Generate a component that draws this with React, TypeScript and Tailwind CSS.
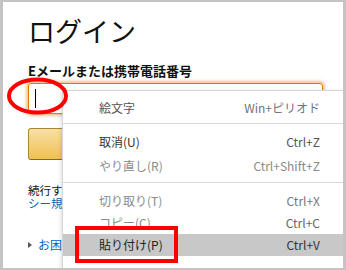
import React from "react";

const font = { fontFamily: '"Noto Sans CJK JP", "Noto Sans", sans-serif' };

type Item = { label: string; keys: string; tone: string; keyTone: string; active?: boolean; h: string };

const groups: Item[][] = [
  [{ label: "絵文字", keys: "Win+ピリオド", tone: "text-[#555]", keyTone: "text-[#6e7384]", h: "h-[24px]" }],
  [
    { label: "取消(U)", keys: "Ctrl+Z", tone: "text-[#333]", keyTone: "text-[#555]", h: "h-[24px]" },
    { label: "やり直し(R)", keys: "Ctrl+Shift+Z", tone: "text-[#8a8a8a]", keyTone: "text-[#8a8a8a]", h: "h-[24px]" },
  ],
  [
    { label: "切り取り(T)", keys: "Ctrl+X", tone: "text-[#8a8a8a]", keyTone: "text-[#777]", h: "h-[22px]" },
    { label: "コピー(C)", keys: "Ctrl+C", tone: "text-[#8a8a8a]", keyTone: "text-[#666]", h: "h-[22px]" },
    { label: "貼り付け(P)", keys: "Ctrl+V", tone: "text-[#222]", keyTone: "text-[#333]", active: true, h: "h-[22px]" },
  ],
];

const ContextMenu = () => (
  <div className="absolute left-[59px] top-[88px] w-[300px] h-[200px] bg-white border border-[#d6d6d6] shadow-[0_2px_5px_rgba(0,0,0,0.18)] pt-[5px] text-[12px]">
    {groups.map((g, gi) => (
      <div key={gi}>
        {gi > 0 && (
          <div className={gi === 1 ? "pt-[3px] pb-[6px]" : "pt-[4px] pb-[7px]"}>
            <div className="h-px bg-[#d9d9d9]" />
          </div>
        )}
        {g.map((it) => (
          <div
            key={it.label}
            className={`flex items-center justify-between pl-[36px] pr-[41px] ${it.h} ${it.active ? "bg-[#c8c8c8]" : ""}`}
          >
            <span className={it.tone}>{it.label}</span>
            <span className={it.keyTone}>{it.keys}</span>
          </div>
        ))}
      </div>
    ))}
  </div>
);

const App = () => {
  return (
    <div
      className="relative w-[346px] h-[270px] overflow-hidden bg-white border-l-[3px] border-r-[3px] border-t-2 border-b-2 border-[#c4c4c4]"
      style={font}
    >
      <div className="pl-[25px] pt-[13px]">
        <h1 className="text-[27px] leading-[32px] font-normal text-[#111]">ログイン</h1>
        <div className="mt-[16px] text-[13px] leading-[16px] font-bold text-[#111]">
          Eメールまたは携帯電話番号
        </div>
        <div className="mt-[4px] w-[295px] h-[31px] rounded-[3px] border border-[#e77600] shadow-[0_0_3px_2px_rgba(228,121,17,0.45)] flex items-center pl-[6px]">
          <div className="w-px h-[19px] bg-black" />
        </div>
        <div className="mt-[14px] w-[295px] h-[32px] rounded-[3px] border border-[#a88734] border-b-[#846a29] bg-gradient-to-b from-[#f7dfa5] to-[#f0c14b]" />
        {/* page text continues under the menu; only its first glyphs show */}
        <div className="mt-[24px] w-[34px] overflow-hidden whitespace-nowrap text-[11.5px] leading-[13px] text-[#111]">
          <div>続行す</div>
          <div className="text-[#0066c0]">シー規</div>
        </div>
        <div className="mt-[28px] w-[34px] overflow-hidden whitespace-nowrap flex items-center gap-[6px] text-[12px] leading-[13px]">
          <span className="shrink-0 w-0 h-0 border-y-[3.5px] border-y-transparent border-l-[4px] border-l-[#555]" />
          <span className="text-[#0066c0]">お困</span>
        </div>
      </div>

      <ContextMenu />

      <svg className="absolute left-[-3px] top-[-2px]" width="346" height="270" viewBox="0 0 346 270">
        <ellipse cx="37.5" cy="96" rx="28.5" ry="16.5" fill="none" stroke="#f00" strokeWidth="4" />
        <rect x="77" y="228" width="99" height="33" fill="none" stroke="#f00" strokeWidth="4" />
      </svg>
    </div>
  );
};

export default App;
